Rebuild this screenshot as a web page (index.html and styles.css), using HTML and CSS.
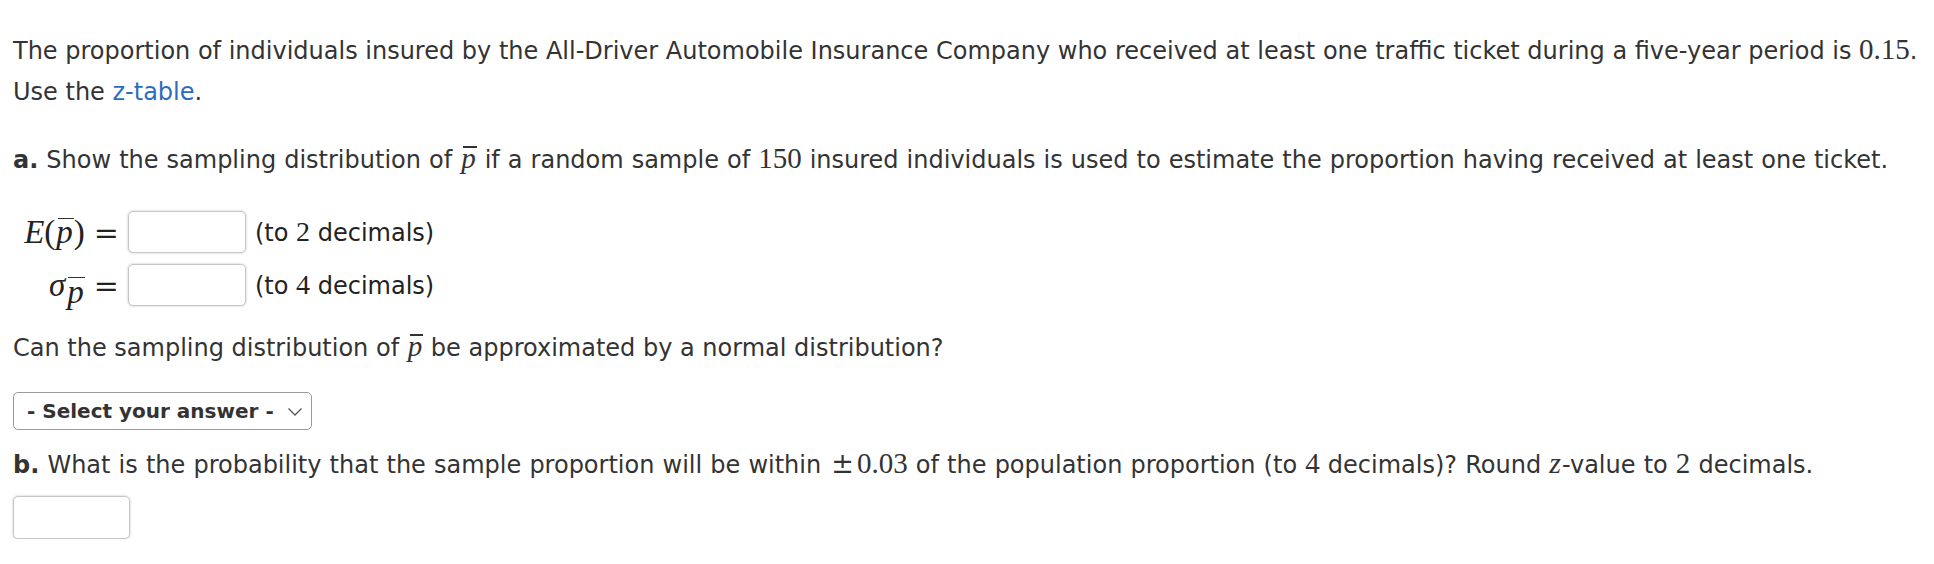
FILE: index.html
```html
<!DOCTYPE html>
<html>
<head>
<meta charset="utf-8">
<link rel="stylesheet" href="styles.css">
</head>
<body>
<div class="question">
  <p class="intro">The proportion of individuals insured by the All-Driver Automobile Insurance Company who received at least one traffic ticket during a five-year period is <span class="mn">0.15</span>.<br>Use the <a class="link" href="#">z-table</a>.</p>

  <p class="part parta"><b>a.</b> Show the sampling distribution of <span class="pbar">p</span> if a random sample of <span class="mn">150</span> insured individuals is used to estimate the proportion having received at least one ticket.</p>

  <div class="eqgrid">
    <div class="lhs"><span class="mi">E</span><span class="mo">(</span><span class="pbar">p</span><span class="mo">)</span><span class="eq">=</span></div>
    <input class="box" type="text">
    <div class="note">(to <span class="mn">2</span> decimals)</div>
    <div class="lhs lhs2"><span class="mi sig">σ</span><span class="sub"><span class="pbar small">p</span></span><span class="eq">=</span></div>
    <input class="box" type="text">
    <div class="note">(to <span class="mn">4</span> decimals)</div>
  </div>

  <p class="plain">Can the sampling distribution of <span class="pbar">p</span> be approximated by a normal distribution?</p>

  <div class="select">
    <span class="select-label">- Select your answer -</span>
    <svg class="chev" width="16" height="10" viewBox="0 0 16 10"><path d="M1.5 1.5 L8 8 L14.5 1.5" fill="none" stroke="#555" stroke-width="1.3"/></svg>
  </div>

  <p class="part partb"><b>b.</b> What is the probability that the sample proportion will be within <span class="mn"><span class="pm">±</span>0.03</span> of the population proportion (to <span class="mn">4</span> decimals)? Round <span class="mi">z</span>-value to <span class="mn">2</span> decimals.</p>

  <input class="box last" type="text">
</div>
</body>
</html>
```

FILE: styles.css
```css
html, body {
  margin: 0;
  padding: 0;
  background: #ffffff;
}

.question {
  padding: 31px 13px 0 13px;
  font-family: "DejaVu Sans", Verdana, sans-serif;
  font-size: 24px;
  color: #333333;
}

p {
  margin: 0;
  line-height: 40px;
}

.intro {
  margin: 0;
  line-height: 41px;
}

.link {
  color: #2b6cc0;
  text-decoration: none;
}

.mn {
  font-family: "Liberation Serif", "DejaVu Serif", serif;
  font-size: 29px;
  line-height: 1;
}

.pm {
  font-family: "DejaVu Serif", "Liberation Serif", serif;
  font-size: 27px;
  margin-left: 2px;
  margin-right: 3px;
}

.mi {
  font-family: "Liberation Serif", "DejaVu Serif", serif;
  font-style: italic;
  font-size: 30px;
  line-height: 1;
  margin-right: 1px;
}

.mo {
  font-family: "Liberation Serif", "DejaVu Serif", serif;
  font-size: 30px;
}

.pbar {
  position: relative;
  display: inline-block;
  font-family: "Liberation Serif", "DejaVu Serif", serif;
  font-style: italic;
  font-size: 29px;
  line-height: 1;
  padding: 0 1px;
}

.pbar::before {
  content: "";
  position: absolute;
  left: 3px;
  right: 0;
  top: 2px;
  height: 1.6px;
  background: #333333;
}

.pbar.small {
  font-size: 19px;
}

.pbar.small::before {
  top: 1px;
  left: 2px;
  height: 1.4px;
}

.part {
  margin-top: 27px;
}

.parta {
  word-spacing: 0.4px;
}

.part b {
  font-weight: bold;
}

.eqgrid {
  display: grid;
  grid-template-columns: 115px 118px auto;
  grid-template-rows: 42px 42px;
  row-gap: 11px;
  column-gap: 0;
  margin-top: 31px;
  align-items: center;
}

.lhs {
  justify-self: end;
  display: flex;
  align-items: baseline;
  color: #222222;
  padding-right: 0;
}

.lhs .mi {
  font-size: 33px;
  margin-right: 0;
}

.lhs .mo {
  font-size: 33px;
}

.lhs .pbar {
  font-size: 33px;
}

.eq {
  font-family: "DejaVu Serif", "Liberation Serif", serif;
  font-size: 30px;
  margin-left: 9px;
  margin-right: 9px;
}

.sig {
  font-style: italic;
}

.sub {
  position: relative;
  top: 7px;
  margin-left: 1px;
}

.box {
  width: 118px;
  height: 42px;
  box-sizing: border-box;
  border: 1px solid #c6c6c6;
  border-radius: 5px;
  box-shadow: 0 0 2px 1px rgba(0, 0, 0, 0.10);
  background: #ffffff;
  margin: 0;
  padding: 0;
  outline: none;
}

.note {
  padding-left: 9px;
  color: #222222;
}

.note .mn {
  font-size: 28px;
}

.plain {
  margin-top: 22px;
}

.select {
  margin-top: 24px;
  width: 299px;
  height: 38px;
  box-sizing: border-box;
  border: 1.5px solid #9a9a9a;
  border-radius: 5px;
  display: flex;
  align-items: center;
  justify-content: space-between;
  padding: 0 8px 0 13px;
  font-weight: bold;
  font-size: 20px;
  color: #333333;
}

.chev {
  margin-top: 1px;
}

.partb {
  margin-top: 15px;
  word-spacing: 0.5px;
}

.box.last {
  display: block;
  margin-top: 11px;
  width: 117px;
  height: 43px;
}
```
